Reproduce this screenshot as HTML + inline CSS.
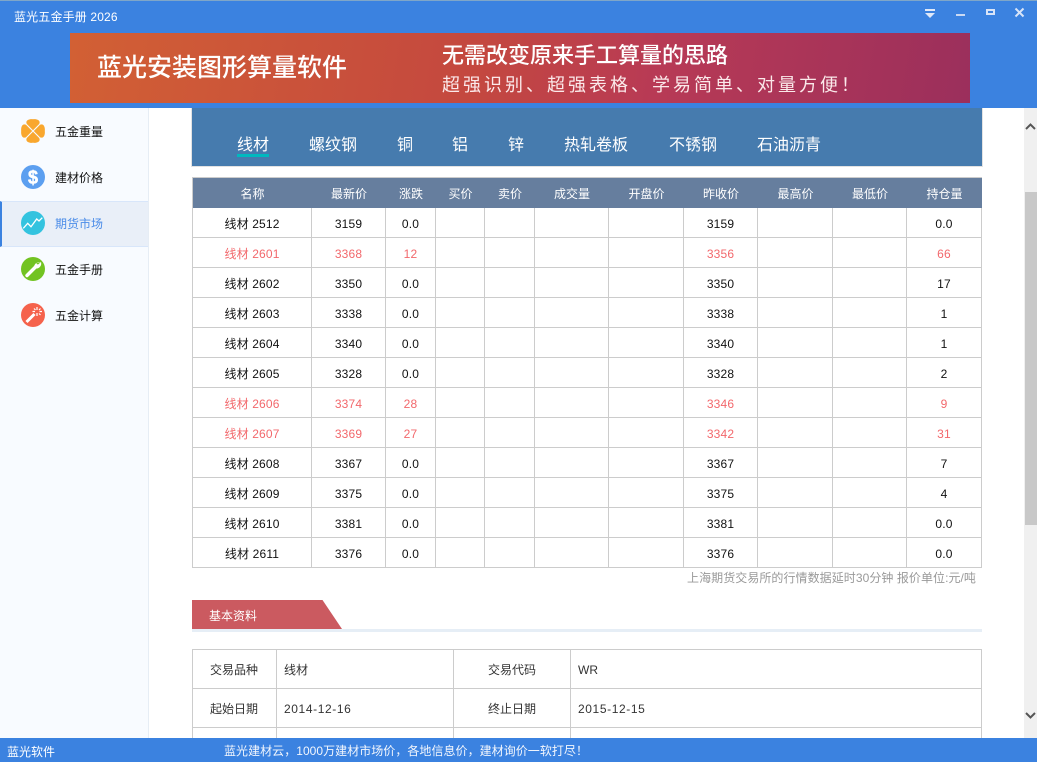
<!DOCTYPE html>
<html lang="zh-CN">
<head>
<meta charset="utf-8">
<title>蓝光五金手册 2026</title>
<style>
html,body{margin:0;padding:0;width:1037px;height:762px;overflow:hidden;background:#fff}
body{position:relative;font-family:"Liberation Sans","Noto Sans CJK SC",sans-serif;font-size:12px;color:#111}
.a{position:absolute;white-space:nowrap}
#top{left:0;top:0;width:1037px;height:108px;background:#3b82e0;border-top:1px solid #7fa6c8;box-sizing:border-box}
#banner{left:70px;top:33px;width:900px;height:70px;background:linear-gradient(100deg,#d26034 0%,#c4483f 45%,#b83a55 65%,#9b2f5c 100%)}
.side{left:0;top:108px;width:148px;height:630px;background:#f8fbff;border-right:1px solid #e6edf5}
.si{left:55px;line-height:18px;height:18px}
.nav{top:137px;line-height:18px;font-size:16px;color:#fff}
table{border-spacing:0;table-layout:fixed;border-collapse:separate}
#q{position:absolute;left:192px;top:177px;width:790px;border-top:1px solid #ccc;border-left:1px solid #ccc}
#q td,#q th{box-sizing:border-box;height:30px;padding:0;text-align:center;font-size:12px;font-weight:normal;border-right:1px solid #ccc;border-bottom:1px solid #ccc}
#q td{padding-top:2px;letter-spacing:.15px}
#q th{background:#667e9e;color:#fff;border:0}
#q tr.r td{color:#f2686c}
.line{background:#ccc}
.it{color:#333;line-height:18px}
.dt{letter-spacing:.6px}
</style>
</head>
<body>
<div class="a" id="top"></div>
<div class="a" style="left:14px;top:9px;color:#fff;line-height:16px;letter-spacing:.15px">蓝光五金手册 2026</div>

<svg class="a" style="left:920px;top:5px" width="110" height="16" viewBox="0 0 110 16">
<rect x="5" y="4" width="10" height="2" fill="#dfe8f8"/>
<path d="M5 8h10l-5 5z" fill="#dfe8f8"/>
<rect x="36" y="9" width="9" height="2" fill="#c9d9f3"/>
<rect x="67" y="5" width="7" height="4" fill="none" stroke="#d8e4f8" stroke-width="2"/>
<path d="M95.500 3.500l8 8M103.500 3.500l-8 8" stroke="#d8e4f8" stroke-width="2" fill="none"/>
</svg>

<div class="a" id="banner"></div>
<div class="a" style="left:97px;top:51px;font-size:25px;line-height:34px;color:#fff;font-weight:500">蓝光安装图形算量软件</div>
<div class="a" style="left:442px;top:42px;font-size:22px;line-height:28px;color:#fff;font-weight:500">无需改变原来手工算量的思路</div>
<div class="a" style="left:442px;top:73px;font-size:18px;line-height:24px;color:#fbe9ea;letter-spacing:3px">超强识别、超强表格、学易简单、对量方便！</div>

<div class="a side"></div>
<div class="a" style="left:0;top:201px;width:148px;height:46px;box-sizing:border-box;background:#e9eff8;border-top:1px solid #d8e6fa;border-bottom:1px solid #d8e6fa;border-left:2px solid #3b82e0"></div>

<svg class="a" style="left:21px;top:119px" width="24" height="24" viewBox="0 0 24 24">
<g fill="#f9a72e"><path d="M12 11.200L5.800 5C4 1.500 8 -.3 12 .2 16 -.3 20 1.500 18.200 5z"/><path transform="rotate(90 12 12)" d="M12 11.200L5.800 5C4 1.500 8 -.3 12 .2 16 -.3 20 1.500 18.200 5z"/><path transform="rotate(180 12 12)" d="M12 11.200L5.800 5C4 1.500 8 -.3 12 .2 16 -.3 20 1.500 18.200 5z"/><path transform="rotate(270 12 12)" d="M12 11.200L5.800 5C4 1.500 8 -.3 12 .2 16 -.3 20 1.500 18.200 5z"/></g>
</svg>
<div class="a si" style="top:123px">五金重量</div>

<svg class="a" style="left:21px;top:165px" width="24" height="24" viewBox="0 0 24 24">
<circle cx="12" cy="12" r="12" fill="#5c9ff0"/>
<text x="12" y="18.500" text-anchor="middle" font-family="Liberation Sans" font-weight="bold" font-size="18" fill="#fff" stroke="#fff" stroke-width=".5">$</text>
</svg>
<div class="a si" style="top:169px">建材价格</div>

<svg class="a" style="left:21px;top:211px" width="24" height="24" viewBox="0 0 24 24">
<circle cx="12" cy="12" r="12" fill="#33c3df"/>
<path d="M2.300 17.300L6.700 12.300 10 15.700 15.700 8 18 10 21.300 6.700" fill="none" stroke="#fff" stroke-width="1.300"/>
</svg>
<div class="a si" style="top:215px;color:#4b8ce8">期货市场</div>

<svg class="a" style="left:21px;top:257px" width="24" height="24" viewBox="0 0 24 24">
<circle cx="12" cy="12" r="12" fill="#72c322"/>
<path d="M6 18.500L14.500 10" stroke="#fff" stroke-width="3.400" stroke-linecap="round"/>
<path d="M19.500 5.500a5 5 0 0 0-6.500 4.500l1.500 1.500a5 5 0 0 0 5.500-6.500l-3 2.500-1.200-.5-.3-1z" fill="#fff"/>
</svg>
<div class="a si" style="top:261px">五金手册</div>

<svg class="a" style="left:21px;top:303px" width="24" height="24" viewBox="0 0 24 24">
<circle cx="12" cy="12" r="12" fill="#f5624c"/>
<path d="M5.500 19l8-8" stroke="#fff" stroke-width="3"/>
<path d="M16 4v3M16 10v3M11.500 8.500h2.500M18.500 8.500h2.500M13 5.500l1.500 1.500M18 10.500l1.500 1.500M19.500 5.500L18 7" stroke="#fff" stroke-width="1.200"/>
</svg>
<div class="a si" style="top:307px">五金计算</div>

<div class="a" style="left:191px;top:108px;width:792px;height:59px;background:#e2e2e2"></div>
<div class="a" style="left:192px;top:108px;width:790px;height:58px;background:#467bae"></div>
<div class="a nav" style="left:237px">线材</div>
<div class="a" style="left:237px;top:154px;width:32px;height:3px;background:#00b9bf"></div>
<div class="a nav" style="left:309px">螺纹钢</div>
<div class="a nav" style="left:397px">铜</div>
<div class="a nav" style="left:452px">铝</div>
<div class="a nav" style="left:508px">锌</div>
<div class="a nav" style="left:564px">热轧卷板</div>
<div class="a nav" style="left:669px">不锈钢</div>
<div class="a nav" style="left:757px">石油沥青</div>

<table id="q">
<colgroup><col style="width:119px"><col style="width:74px"><col style="width:50px"><col style="width:49px"><col style="width:50px"><col style="width:74px"><col style="width:75px"><col style="width:74px"><col style="width:75px"><col style="width:74px"><col style="width:75px"></colgroup>
<tr><th>名称</th><th>最新价</th><th>涨跌</th><th>买价</th><th>卖价</th><th>成交量</th><th>开盘价</th><th>昨收价</th><th>最高价</th><th>最低价</th><th>持仓量</th></tr>
<tr><td>线材 2512</td><td>3159</td><td>0.0</td><td></td><td></td><td></td><td></td><td>3159</td><td></td><td></td><td>0.0</td></tr>
<tr class="r"><td>线材 2601</td><td>3368</td><td>12</td><td></td><td></td><td></td><td></td><td>3356</td><td></td><td></td><td>66</td></tr>
<tr><td>线材 2602</td><td>3350</td><td>0.0</td><td></td><td></td><td></td><td></td><td>3350</td><td></td><td></td><td>17</td></tr>
<tr><td>线材 2603</td><td>3338</td><td>0.0</td><td></td><td></td><td></td><td></td><td>3338</td><td></td><td></td><td>1</td></tr>
<tr><td>线材 2604</td><td>3340</td><td>0.0</td><td></td><td></td><td></td><td></td><td>3340</td><td></td><td></td><td>1</td></tr>
<tr><td>线材 2605</td><td>3328</td><td>0.0</td><td></td><td></td><td></td><td></td><td>3328</td><td></td><td></td><td>2</td></tr>
<tr class="r"><td>线材 2606</td><td>3374</td><td>28</td><td></td><td></td><td></td><td></td><td>3346</td><td></td><td></td><td>9</td></tr>
<tr class="r"><td>线材 2607</td><td>3369</td><td>27</td><td></td><td></td><td></td><td></td><td>3342</td><td></td><td></td><td>31</td></tr>
<tr><td>线材 2608</td><td>3367</td><td>0.0</td><td></td><td></td><td></td><td></td><td>3367</td><td></td><td></td><td>7</td></tr>
<tr><td>线材 2609</td><td>3375</td><td>0.0</td><td></td><td></td><td></td><td></td><td>3375</td><td></td><td></td><td>4</td></tr>
<tr><td>线材 2610</td><td>3381</td><td>0.0</td><td></td><td></td><td></td><td></td><td>3381</td><td></td><td></td><td>0.0</td></tr>
<tr><td>线材 2611</td><td>3376</td><td>0.0</td><td></td><td></td><td></td><td></td><td>3376</td><td></td><td></td><td>0.0</td></tr>
</table>

<div class="a" style="right:61px;top:569px;line-height:18px;color:#999;letter-spacing:.06px">上海期货交易所的行情数据延时30分钟 报价单位:元/吨</div>

<svg class="a" style="left:192px;top:600px" width="151" height="30" viewBox="0 0 151 30"><path d="M0 0H130.500L150 29H0z" fill="#cb5a60"/></svg>
<div class="a" style="left:192px;top:629px;width:790px;height:3px;background:#e6eef6"></div>
<div class="a" style="left:209px;top:607px;color:#fff;line-height:18px">基本资料</div>

<div class="a line" style="left:192px;top:649px;width:790px;height:1px"></div>
<div class="a line" style="left:192px;top:688px;width:790px;height:1px"></div>
<div class="a line" style="left:192px;top:727px;width:790px;height:1px"></div>
<div class="a line" style="left:192px;top:649px;width:1px;height:89px"></div>
<div class="a line" style="left:276px;top:649px;width:1px;height:89px"></div>
<div class="a line" style="left:453px;top:649px;width:1px;height:89px"></div>
<div class="a line" style="left:570px;top:649px;width:1px;height:89px"></div>
<div class="a line" style="left:981px;top:649px;width:1px;height:89px"></div>
<div class="a it" style="left:210px;top:661px">交易品种</div>
<div class="a it" style="left:284px;top:661px">线材</div>
<div class="a it" style="left:488px;top:661px">交易代码</div>
<div class="a it" style="left:578px;top:661px">WR</div>
<div class="a it" style="left:210px;top:700px">起始日期</div>
<div class="a it dt" style="left:284px;top:700px">2014-12-16</div>
<div class="a it" style="left:488px;top:700px">终止日期</div>
<div class="a it dt" style="left:578px;top:700px">2015-12-15</div>

<div class="a" style="left:1024px;top:108px;width:13px;height:630px;background:#f0f0f0"></div>
<div class="a" style="left:1025px;top:192px;width:12px;height:333px;background:#c8c8c8"></div>
<svg class="a" style="left:1024px;top:122px" width="13" height="10" viewBox="0 0 13 10"><path d="M2 7l4.500-4.500L11 7" fill="none" stroke="#555" stroke-width="2"/></svg>
<svg class="a" style="left:1024px;top:711px" width="13" height="10" viewBox="0 0 13 10"><path d="M2 2l4.500 4.500L11 2" fill="none" stroke="#555" stroke-width="2"/></svg>

<div class="a" style="left:0;top:738px;width:1037px;height:24px;background:#3b82e0"></div>
<div class="a" style="left:7px;top:743px;line-height:18px;color:#fff">蓝光软件</div>
<div class="a" style="left:224px;top:742px;line-height:18px;color:#f2f6fd;letter-spacing:.04px">蓝光建材云，1000万建材市场价，各地信息价，建材询价一软打尽！</div>
</body>
</html>
